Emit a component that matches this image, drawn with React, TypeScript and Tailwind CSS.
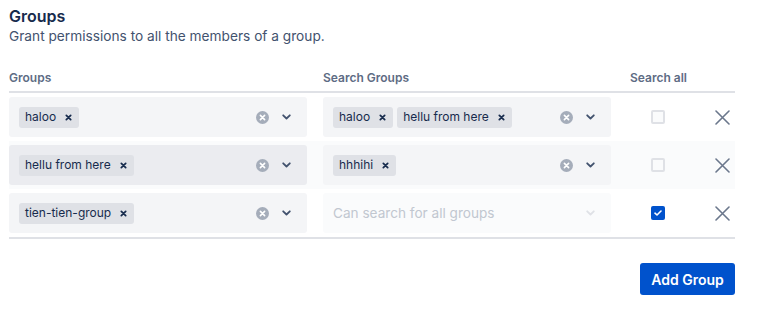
import React from "react";

type Row = {
  groups: string[];
  search: string[];
  searchAll: boolean;
  hovered?: boolean;
};

const rows: Row[] = [
  { groups: ["haloo"], search: ["haloo", "hellu from here"], searchAll: false },
  { groups: ["hellu from here"], search: ["hhhihi"], searchAll: false, hovered: true },
  { groups: ["tien-tien-group"], search: [], searchAll: true },
];

function Tag({ label }: { label: string }) {
  return (
    <span className="flex items-center h-[21px] rounded-[3px] bg-[#dfe1e6] pl-[6px] pr-[7px] text-[12px] text-[#172b4d]">
      {label}
      <svg width="7" height="7" viewBox="0 0 8 8" className="ml-[9px]">
        <path d="M1.5 1.5l5 5M6.5 1.5l-5 5" stroke="#172b4d" strokeWidth="2" strokeLinecap="round" />
      </svg>
    </span>
  );
}

function Chevron({ color }: { color: string }) {
  return (
    <svg width="9" height="6" viewBox="0 0 9 6">
      <path d="M1.2 1.3l3.3 3.2 3.3-3.2" stroke={color} strokeWidth="1.8" fill="none" strokeLinecap="round" strokeLinejoin="round" />
    </svg>
  );
}

function ClearIcon() {
  return (
    <svg width="13" height="13" viewBox="0 0 13 13">
      <circle cx="6.5" cy="6.5" r="6.5" fill="#a5adba" />
      <path d="M4.4 4.4l4.2 4.2M8.6 4.4l-4.2 4.2" stroke="#fff" strokeWidth="1.6" strokeLinecap="round" />
    </svg>
  );
}

function MultiSelect({
  values,
  width,
  hovered,
  disabled,
  placeholder,
}: {
  values: string[];
  width: string;
  hovered?: boolean;
  disabled?: boolean;
  placeholder?: string;
}) {
  return (
    <div
      className={`flex items-center h-[40px] rounded-[3px] pl-[10px] pr-[16px] ${width} ${
        disabled ? "bg-[#fafbfc]" : hovered ? "bg-[#ebecf0]" : "bg-[#f4f5f7]"
      }`}
    >
      <div className="flex flex-1 items-center gap-[4px]">
        {values.length === 0 && placeholder ? (
          <span className="text-[13.6px] text-[#c1c7d0]">{placeholder}</span>
        ) : (
          values.map((v) => <Tag key={v} label={v} />)
        )}
      </div>
      {!disabled && <ClearIcon />}
      <div className="ml-[13px] flex">
        <Chevron color={disabled ? "#dfe1e6" : "#42526e"} />
      </div>
    </div>
  );
}

function Checkbox({ checked }: { checked: boolean }) {
  if (checked) {
    return (
      <div className="w-[14px] h-[14px] rounded-[2px] bg-[#0052cc] flex items-center justify-center">
        <svg width="8" height="6" viewBox="0 0 8 6">
          <path d="M1 3.2l2 1.8L7 1" stroke="#fff" strokeWidth="1.6" fill="none" strokeLinecap="round" strokeLinejoin="round" />
        </svg>
      </div>
    );
  }
  return <div className="w-[14px] h-[14px] rounded-[2px] border-2 border-[#dfe1e6] bg-[#fafbfc]" />;
}

export default function App() {
  return (
    <div className="min-h-screen bg-white pl-[9px] pt-[6px] font-['Inter','Liberation_Sans',sans-serif]">
      <div className="w-[726px]">
        <h1 className="text-[16px] leading-[20px] font-semibold text-[#172b4d]">Groups</h1>
        <p className="text-[13.7px] leading-[20px] text-[#42526e]">
          Grant permissions to all the members of a group.
        </p>

        <div className="mt-[24px] flex items-end pb-[5px] border-b-2 border-[#dfe1e6] text-[12px] leading-[16px] font-semibold text-[#5e6c84]">
          <div className="w-[314px]">Groups</div>
          <div className="w-[307px]">Search Groups</div>
          <div>Search all</div>
        </div>

        <div className="border-b-2 border-[#dfe1e6]">
          {rows.map((r, i) => (
            <div
              key={i}
              className={`flex items-center h-[48px] ${r.hovered ? "bg-[#fafbfc]" : ""}`}
            >
              <div className="w-[314px]">
                <MultiSelect values={r.groups} width="w-[298px]" hovered={r.hovered} />
              </div>
              <div className="w-[307px]">
                <MultiSelect
                  values={r.search}
                  width="w-[288px]"
                  disabled={r.searchAll}
                  placeholder="Can search for all groups"
                />
              </div>
              <div className="w-[56px] flex justify-center">
                <Checkbox checked={r.searchAll} />
              </div>
              <div className="flex-1 flex justify-end pr-[5px]">
                <svg width="15" height="15" viewBox="0 0 15 15">
                  <path d="M1 1l13 13M14 1L1 14" stroke="#6b778c" strokeWidth="1.6" strokeLinecap="round" />
                </svg>
              </div>
            </div>
          ))}
        </div>

        <div className="flex justify-end mt-[24px]">
          <button className="h-[32px] w-[95px] rounded-[3px] bg-[#0052cc] text-white text-[14px] font-semibold">
            Add Group
          </button>
        </div>
      </div>
    </div>
  );
}
